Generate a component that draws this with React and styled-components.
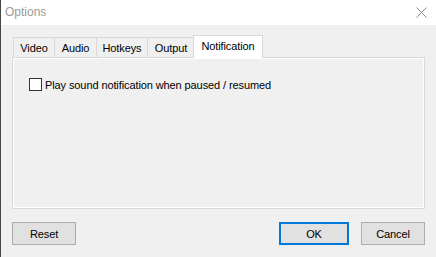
import styled, { createGlobalStyle } from 'styled-components';

const GlobalStyle = createGlobalStyle`
  html, body {
    margin: 0;
    padding: 0;
    overflow: hidden;
    background: #f0f0f0;
  }
  * {
    box-sizing: border-box;
  }
`

const Window = styled.div`
  width: 436px;
  height: 257px;
  display: flex;
  flex-direction: column;
  background: #f0f0f0;
  border-left: 1px solid #464646;
  font-family: "Liberation Sans", Arial, sans-serif;
  font-size: 11px;
  letter-spacing: -0.1px;
  color: #000;
`

const TitleBar = styled.div`
  height: 25px;
  background: #fff;
  display: flex;
  align-items: center;
  justify-content: space-between;
  padding: 0 9px 1px 4px;
  color: #9a9a9a;
  font-size: 12px;
  letter-spacing: 0;
`

const Body = styled.div`
  flex: 1;
  display: flex;
  flex-direction: column;
  padding: 10px 11px 0 11px;
`

const TabStrip = styled.div`
  display: flex;
  align-items: flex-end;
  height: 22px;
  padding-left: 1px;
`

const Tab = styled.div`
  width: ${p => p.$w}px;
  height: ${p => (p.$active ? 23 : 20)}px;
  margin-bottom: ${p => (p.$active ? -1 : 0)}px;
  margin-left: ${p => (p.$active ? -1 : 0)}px;
  position: relative;
  z-index: ${p => (p.$active ? 1 : 0)};
  display: flex;
  align-items: center;
  justify-content: center;
  padding-bottom: ${p => (p.$active ? 3 : 0)}px;
  background: ${p => (p.$active ? '#fff' : '#f0f0f0')};
  border: 1px solid #d9d9d9;
  border-bottom: none;
  border-right: ${p => (p.$last ? '1px solid #d9d9d9' : 'none')};
`

const Panel = styled.div`
  width: 413px;
  height: 152px;
  border: 1px solid #d9d9d9;
  box-shadow: inset 0 0 0 1px #fff;
  padding: 20px 16px;
`

const CheckRow = styled.label`
  display: flex;
  align-items: center;
  gap: 3px;
`

const Box = styled.span`
  width: 13px;
  height: 13px;
  background: #fff;
  border: 1px solid #333;
`

const Footer = styled.div`
  display: flex;
  align-items: center;
  margin-top: 13px;
`

const Spacer = styled.div`
  flex: 1;
`

const Button = styled.button`
  width: ${p => (p.$primary ? 70 : 64)}px;
  height: 23px;
  margin-left: ${p => p.$ml || 0}px;
  background: #e1e1e1;
  border: ${p => (p.$primary ? '2px solid #0078d7' : '1px solid #adadad')};
  font-family: "Liberation Sans", Arial, sans-serif;
  font-size: 11px;
  letter-spacing: -0.1px;
  color: #000;
  padding: 0;
`

const tabs = [
  { label: 'Video', w: 41 },
  { label: 'Audio', w: 42 },
  { label: 'Hotkeys', w: 51 },
  { label: 'Output', w: 47 },
  { label: 'Notification', w: 70, active: true },
]

export default function App() {
  return (
    <>
      <GlobalStyle />
      <Window>
        <TitleBar>
          <span>Options</span>
          <svg width="11" height="11" viewBox="0 0 11 11">
            <path d="M0.5 0.5 L10.5 10.5 M10.5 0.5 L0.5 10.5" stroke="#8c8c8c" strokeWidth="1" />
          </svg>
        </TitleBar>
        <Body>
          <TabStrip>
            {tabs.map((t, i) => (
              <Tab key={t.label} $w={t.w} $active={t.active} $last={i === tabs.length - 1}>
                {t.label}
              </Tab>
            ))}
          </TabStrip>
          <Panel>
            <CheckRow>
              <Box />
              Play sound notification when paused / resumed
            </CheckRow>
          </Panel>
          <Footer>
            <Button>Reset</Button>
            <Spacer />
            <Button $primary>OK</Button>
            <Button $ml={12}>Cancel</Button>
          </Footer>
        </Body>
      </Window>
    </>
  );
}
